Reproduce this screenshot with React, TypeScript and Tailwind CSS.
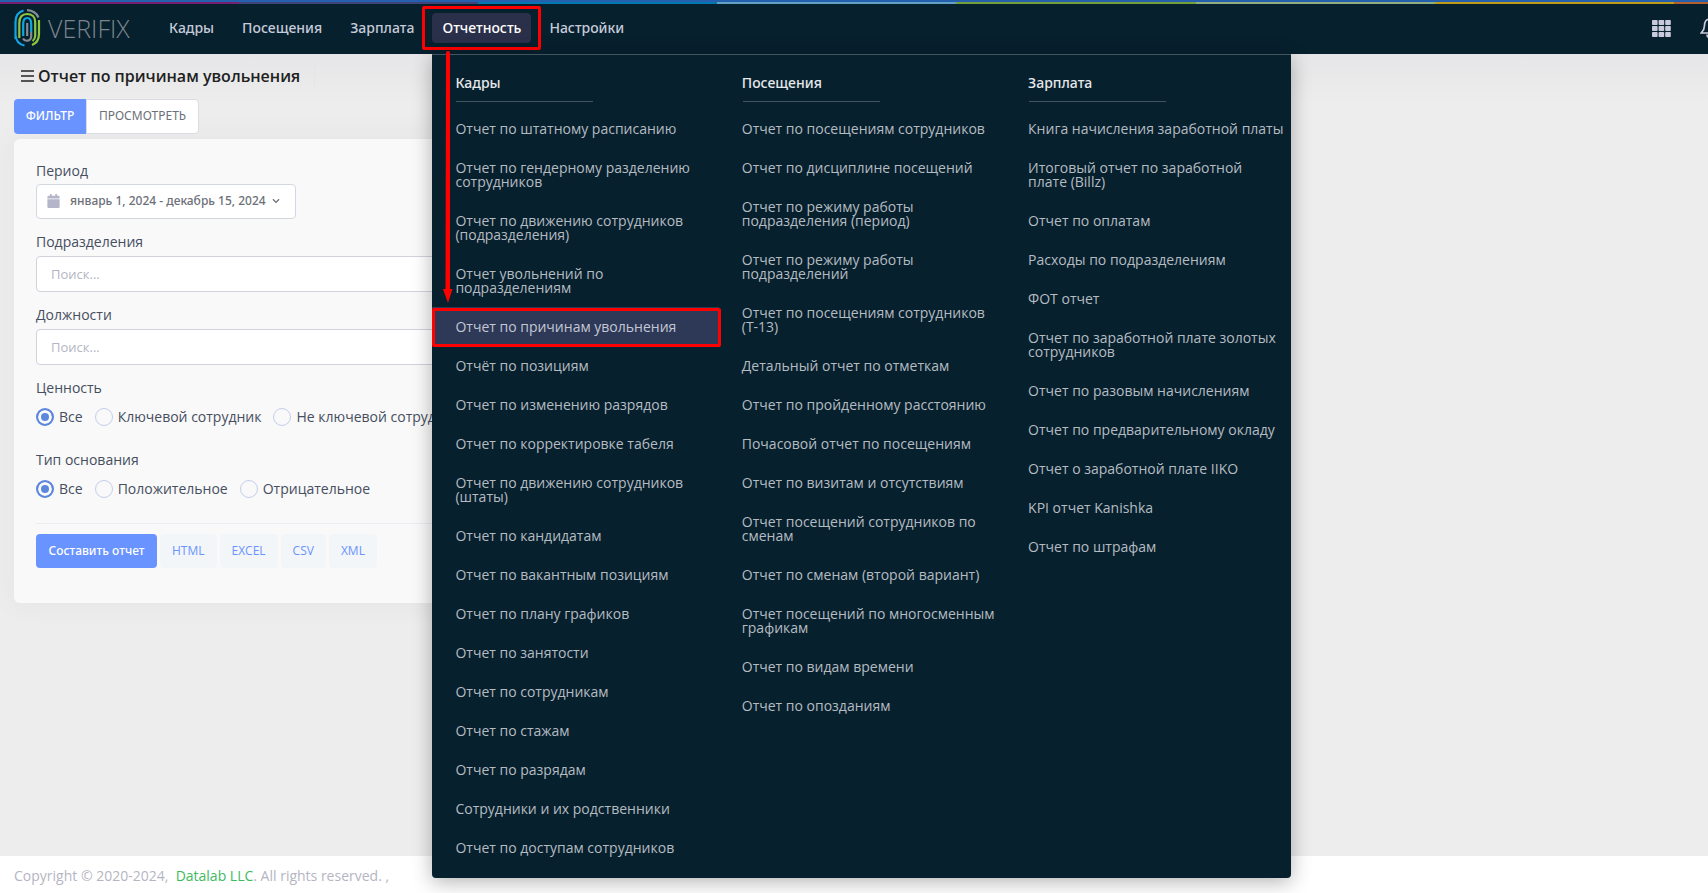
import { useState } from "react";
import { clsx } from "clsx";
import { FaCalendar, FaChevronDown } from "react-icons/fa";

const NAV = ["Кадры", "Посещения", "Зарплата", "Отчетность", "Настройки"];

const STRIPES = ["bg-[#741f6f]", "bg-[#3c4478]", "bg-[#0077b0]", "bg-[#62a0c4]", "bg-[#74a03c]", "bg-[#8fae80]", "bg-[#bd9a17]"];

const MENU = [
  {
    title: "Кадры",
    items: [
      "Отчет по штатному расписанию",
      "Отчет по гендерному разделению сотрудников",
      "Отчет по движению сотрудников (подразделения)",
      "Отчет увольнений по подразделениям",
      "Отчет по причинам увольнения",
      "Отчёт по позициям",
      "Отчет по изменению разрядов",
      "Отчет по корректировке табеля",
      "Отчет по движению сотрудников (штаты)",
      "Отчет по кандидатам",
      "Отчет по вакантным позициям",
      "Отчет по плану графиков",
      "Отчет по занятости",
      "Отчет по сотрудникам",
      "Отчет по стажам",
      "Отчет по разрядам",
      "Сотрудники и их родственники",
      "Отчет по доступам сотрудников",
    ],
  },
  {
    title: "Посещения",
    items: [
      "Отчет по посещениям сотрудников",
      "Отчет по дисциплине посещений",
      "Отчет по режиму работы подразделения (период)",
      "Отчет по режиму работы подразделений",
      "Отчет по посещениям сотрудников (Т-13)",
      "Детальный отчет по отметкам",
      "Отчет по пройденному расстоянию",
      "Почасовой отчет по посещениям",
      "Отчет по визитам и отсутствиям",
      "Отчет посещений сотрудников по сменам",
      "Отчет по сменам (второй вариант)",
      "Отчет посещений по многосменным графикам",
      "Отчет по видам времени",
      "Отчет по опозданиям",
    ],
  },
  {
    title: "Зарплата",
    items: [
      "Книга начисления заработной платы",
      "Итоговый отчет по заработной плате\u00a0(Billz)",
      "Отчет по оплатам",
      "Расходы по подразделениям",
      "ФОТ отчет",
      "Отчет по заработной плате золотых сотрудников",
      "Отчет по разовым начислениям",
      "Отчет по предварительному окладу",
      "Отчет о заработной плате IIKO",
      "KPI отчет Kanishka",
      "Отчет по штрафам",
    ],
  },
];

const ACTIVE_REPORT = "Отчет по причинам увольнения";

export default function App() {
  return (
    <div className="flex min-h-screen flex-col bg-[#ededed] font-['Open_Sans','Noto_Sans',sans-serif] text-sm text-[#464e5f]">
      <Header />
      <main className="flex-1 bg-linear-to-b from-[#e6e6e8] to-[#ededed] to-[50px] px-3.5 pb-10">
        <div className="flex h-[45px] items-center pb-px">
          <button type="button" aria-label="Меню" className="ml-[7px] mr-1 flex w-[13px] flex-col gap-[3px]">
            <span className="h-0.5 bg-[#555]" />
            <span className="h-0.5 bg-[#555]" />
            <span className="h-0.5 bg-[#555]" />
          </button>
          <h1 className="text-base font-semibold text-[#212121]">Отчет по причинам увольнения</h1>
          <span className="ml-3.5 h-[25px] w-px bg-[#e3e5ea]" />
        </div>

        <div className="flex font-['Noto_Sans',sans-serif] text-xs">
          <button type="button" className="h-[35px] w-[72px] rounded-l bg-[#6993ff] pb-0.5 font-medium text-white">ФИЛЬТР</button>
          <button type="button" className="h-[35px] w-[113px] rounded-r border border-[#d9dce2] bg-white pb-0.5 text-[#6c7078]">ПРОСМОТРЕТЬ</button>
        </div>

        <FilterCard />
      </main>
      <footer className="flex h-[37px] items-center bg-white px-3.5 pt-0.5 text-[#b5b5c3]">
        <p>
          Copyright © 2020-2024,&nbsp; <a href="#datalab" className="text-[#3dbb5d]">Datalab LLC</a>. All rights reserved. ,
        </p>
      </footer>
    </div>
  );
}

function Header() {
  return (
    <header className="relative z-10 bg-[#07202e]">
      <div className="h-0.5 bg-[#2460ae]" />
      <div className="flex h-0.5 bg-[#b3602e]">
        {STRIPES.map((color) => (
          <span key={color} className={clsx("w-[14%]", color)} />
        ))}
      </div>
      <div className="flex h-[50px] items-stretch pb-0.5 pl-3.5">
        <a href="#home" aria-label="Verifix" className="flex w-[145px] items-center">
          <Logo />
        </a>
        <nav className="flex items-center gap-2 font-['Noto_Sans',sans-serif] font-medium">
          {NAV.map((label) =>
            label === "Отчетность" ? (
              <div key={label} className="relative flex h-full items-center">
                <button type="button" aria-expanded="true" className="h-[30px] rounded bg-[#2a2f4a] px-2.5 text-white">{label}</button>
                <Frame className="-inset-x-2.5 top-0.5 h-11" />
                <MegaMenu />
              </div>
            ) : (
              <button key={label} type="button" className="h-[30px] px-2.5 text-[#c5cbd8]">{label}</button>
            ),
          )}
        </nav>
        <div className="ml-auto flex w-14 items-center gap-[29px] overflow-hidden text-[#c9cbdc]">
          <button type="button" aria-label="Приложения" className="shrink-0">
            <svg viewBox="0 0 19 17" className="h-[17px] w-[19px]" fill="currentColor">
              {[0, 6, 12].map((y) => [0, 6.6, 13.2].map((x) => <rect key={`${x}-${y}`} x={x} y={y} width="5.6" height="5" rx="0.8" />))}
            </svg>
          </button>
          <button type="button" aria-label="Уведомления" className="shrink-0">
            <svg viewBox="0 0 20 22" className="h-[22px] w-5" fill="none" stroke="currentColor" strokeWidth="1.7">
              <path d="M10 2C6 2 4.500 5 4.500 8.500C4.500 12.500 3 14 1.200 16H18.800C17 14 15.500 12.500 15.500 8.500C15.500 5 14 2 10 2Z" />
              <path d="M7 17.500a3 3 0 0 0 6 0" />
            </svg>
          </button>
        </div>
      </div>
    </header>
  );
}

function MegaMenu() {
  return (
    <div className="absolute left-0 top-[50px] grid w-[859px] grid-cols-3 rounded-b-sm border-t border-[#42555f] bg-[#07202e] pb-[11px] pt-[18px] font-['Open_Sans','Noto_Sans',sans-serif] font-normal shadow-[0_4px_20px_rgba(0,0,0,0.3)]">
      {MENU.map((group) => (
        <section key={group.title}>
          <h2 className="px-[23px] font-['Noto_Sans',sans-serif] leading-5 font-medium text-[#e6e8ea]">{group.title}</h2>
          <hr className="mx-6 mt-2 mb-[7px] w-[137px] border-[#42555f]" />
          <ul>
            {group.items.map((item) => (
              <li key={item} className="relative">
                <a
                  href="#report"
                  className={clsx("block pl-[23px] pr-1 pt-[13px] pb-3 leading-3.5 text-[#b5bcc1]", item === ACTIVE_REPORT && "bg-[#2e3857] text-[#c3c8d4]")}
                >
                  {item}
                </a>
                {item === ACTIVE_REPORT && <Frame className="top-px -bottom-px left-0 -right-0.5" />}
              </li>
            ))}
          </ul>
        </section>
      ))}
      <svg viewBox="0 0 12 252" className="absolute -top-1 left-2.5 h-[252px] w-3" fill="#f00">
        <path d="M4 2Q4 0 6 0T8 2V238H10.500L6 252L1 238H3.500Z" />
      </svg>
    </div>
  );
}

// red highlight around the current path in the menu
function Frame({ className }: { className: string }) {
  return <span className={clsx("pointer-events-none absolute rounded-xs border-3 border-[#f00]", className)} />;
}

function FilterCard() {
  return (
    <form className="mt-[5px] w-1/2 rounded-md bg-[#f9f9f9] px-[22px] pt-[21px] pb-[35px] shadow-[0_0_30px_rgba(82,63,105,0.05)]" onSubmit={(e) => e.preventDefault()}>
      <p className="leading-[22px]">Период</p>
      <button type="button" className="mt-0.5 flex h-[35px] w-[260px] items-center rounded border border-[#d3d8e0] bg-white px-2.5 pb-0.5 font-['Noto_Sans',sans-serif] text-xs font-medium text-[#6c7078]">
        <FaCalendar className="mr-2.5 h-3.5 w-[13px] text-[#b5b5c9]" />
        январь 1, 2024 - декабрь 15, 2024
        <FaChevronDown className="ml-1.5 size-2" />
      </button>

      <SearchField id="divisions" label="Подразделения" className="mt-3" />
      <SearchField id="jobs" label="Должности" className="mt-3" />

      <RadioGroup name="value" label="Ценность" options={["Все", "Ключевой сотрудник", "Не ключевой сотрудник"]} className="mt-3" />
      <RadioGroup name="reason" label="Тип основания" options={["Все", "Положительное", "Отрицательное"]} className="mt-[22px]" />

      <hr className="mt-6 mb-2.5 border-[#ebedf3]" />
      <div className="flex gap-[3px] text-xs">
        <button type="submit" className="h-[34px] w-[121px] rounded bg-[#6993ff] font-['Noto_Sans',sans-serif] font-medium text-white">Составить отчет</button>
        {["HTML", "EXCEL", "CSV", "XML"].map((format) => (
          <button key={format} type="button" className="h-[34px] rounded bg-[#f3f6f9] px-3 text-[#6993ff]">{format}</button>
        ))}
      </div>
    </form>
  );
}

function SearchField({ id, label, className }: { id: string; label: string; className: string }) {
  return (
    <div className={className}>
      <label htmlFor={id} className="block leading-[22px]">{label}</label>
      <input id={id} type="text" placeholder="Поиск..." className="mt-[3px] block h-9 w-full rounded border border-[#d0d3dc] bg-white px-3.5 text-[13px] outline-none placeholder:text-[#b5b5c3]" />
    </div>
  );
}

function RadioGroup({ name, label, options, className }: { name: string; label: string; options: string[]; className: string }) {
  const [value, setValue] = useState(options[0]);

  return (
    <fieldset className={className}>
      <legend className="leading-[22px]">{label}</legend>
      <div className="mt-2 flex gap-3">
        {options.map((option) => (
          <label key={option} className="flex items-center gap-[5px] leading-5 whitespace-nowrap">
            <input
              type="radio"
              name={name}
              checked={value === option}
              onChange={() => setValue(option)}
              className="size-[18px] appearance-none rounded-full border border-[#c5cdea] checked:border-2 checked:border-[#5b87de] checked:bg-[#5b87de] checked:shadow-[inset_0_0_0_3px_#f9f9f9]"
            />
            {option}
          </label>
        ))}
      </div>
    </fieldset>
  );
}

function Logo() {
  return (
    <svg viewBox="0 0 120 38" className="h-[38px] w-[120px]" fill="none" strokeWidth="2.2">
      <path d="M1.500 30V13C1.500 7 4 3 9.500 1.500M1.500 26C2 32 5 35.500 10.500 36.500" stroke="#12a5e0" />
      <path d="M13 1.200C18 1.500 22.500 4 24.500 8.500" stroke="#858c92" />
      <path d="M25 11V25C25 31 22 34.500 18 36" stroke="#8dc63f" />
      <path d="M5.300 29V14C5.300 8 8 5 13 5C18 5 21.200 8 21.200 13V27C21 29 20 31 18.500 32" stroke="#8dc63f" />
      <path d="M9.200 27V15C9.200 11 10.500 9 13.200 9S17.200 11 17.200 15V23" stroke="#12a5e0" />
      <path d="M13.200 14V27M9 29.500C11 33 17.200 32.500 17.200 27V23" stroke="#858c92" />
      <text x="34" y="29" fill="#7c858c" fontFamily="Open Sans" fontWeight="300" fontSize="25">VERIFIX</text>
    </svg>
  );
}
